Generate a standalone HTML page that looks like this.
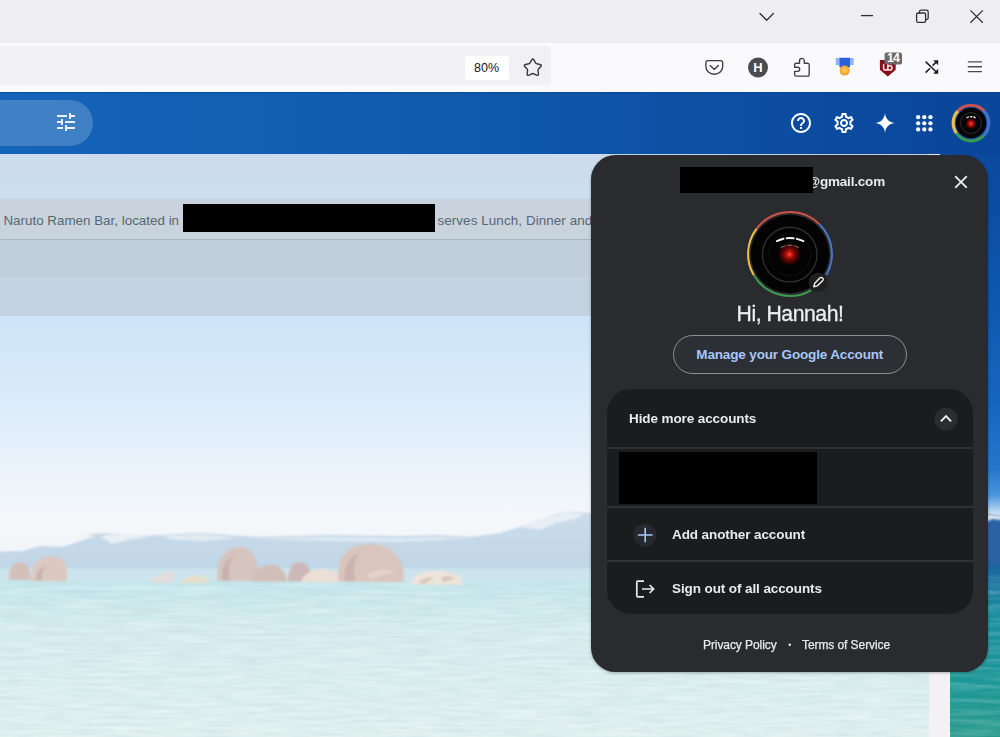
<!DOCTYPE html>
<html lang="en">
<head>
<meta charset="utf-8">
<title>Google Account menu</title>
<style>
*{box-sizing:border-box;margin:0;padding:0}
html,body{width:1000px;height:737px;overflow:hidden;background:#fff}
body{position:relative;font-family:"Liberation Sans",sans-serif;color:#fff}
.abs{position:absolute}
#photo{left:0;top:92px;width:1000px;height:645px}
#titlebar{left:0;top:0;width:1000px;height:43px;background:#eeeef2}
#toolbar{left:0;top:42.5px;width:1000px;height:49.5px;background:#fafafc}
#urlbar{left:0;top:46.2px;width:551px;height:38.6px;background:#f1f1f5;border-radius:0 4px 4px 0}
#zoom{left:464.5px;top:55.5px;width:44px;height:24px;background:#fff;border-radius:3px;color:#15141a;font-size:12.5px;line-height:24.5px;text-align:center}
#pill{left:-40px;top:100px;width:133px;height:46px;border-radius:23px;background:rgba(255,255,255,.19)}
#panel{left:0;top:154px;width:950px;height:583px}
.row{left:0;width:950px}
#rowtext{left:3.4px;top:211.7px;font-size:13.4px;line-height:18px;color:#5a6672;white-space:nowrap}
.black{background:#000}
#dialog{left:591px;top:155.3px;width:397px;height:516.4px;border-radius:24.5px;background:#2a2b2e;box-shadow:0 1px 3px rgba(0,0,0,.3)}
#card{left:607px;top:389px;width:366px;height:225px;border-radius:24px;background:#303134;overflow:hidden}
.crow{position:absolute;left:0;width:366px;background:#1b1c1e}
.t{position:absolute;white-space:nowrap}
</style>
</head>
<body>
<!-- photo background -->
<svg id="photo" class="abs" viewBox="0 92 1000 645" preserveAspectRatio="none">
  <defs>
    <linearGradient id="hdr" gradientUnits="userSpaceOnUse" x1="0" y1="0" x2="1000" y2="0">
      <stop offset="0" stop-color="#1464b9"/>
      <stop offset=".45" stop-color="#105aae"/>
      <stop offset=".75" stop-color="#0c4ea2"/>
      <stop offset="1" stop-color="#094599"/>
    </linearGradient>
    <linearGradient id="wsky" gradientUnits="userSpaceOnUse" x1="0" y1="154" x2="0" y2="545">
      <stop offset="0" stop-color="#cddcec"/>
      <stop offset=".41" stop-color="#cce4f8"/>
      <stop offset=".55" stop-color="#d5e9f9"/>
      <stop offset=".7" stop-color="#e0eefa"/>
      <stop offset=".83" stop-color="#ecf4fa"/>
      <stop offset=".93" stop-color="#f4f7fa"/>
      <stop offset="1" stop-color="#f4f7fa"/>
    </linearGradient>
    <linearGradient id="wmtn" gradientUnits="userSpaceOnUse" x1="0" y1="510" x2="0" y2="570">
      <stop offset="0" stop-color="#ccdcea"/>
      <stop offset="1" stop-color="#c0d6e6"/>
    </linearGradient>
    <linearGradient id="wwater" gradientUnits="userSpaceOnUse" x1="0" y1="578" x2="0" y2="737">
      <stop offset="0" stop-color="#cfe5ee"/>
      <stop offset=".035" stop-color="#c2e5ea"/>
      <stop offset=".14" stop-color="#c9e8ec"/>
      <stop offset=".33" stop-color="#d4ecee"/>
      <stop offset=".64" stop-color="#daeeef"/>
      <stop offset="1" stop-color="#dff0ef"/>
    </linearGradient>
    <linearGradient id="ssky" gradientUnits="userSpaceOnUse" x1="0" y1="92" x2="0" y2="516">
      <stop offset="0" stop-color="#094599"/>
      <stop offset=".25" stop-color="#0b4ca2"/>
      <stop offset=".5" stop-color="#0f58b0"/>
      <stop offset=".75" stop-color="#1767be"/>
      <stop offset=".89" stop-color="#2577cc"/>
      <stop offset=".95" stop-color="#4a94dc"/>
      <stop offset=".98" stop-color="#9cc6ec"/>
      <stop offset="1" stop-color="#e0ecf6"/>
    </linearGradient>
    <linearGradient id="swater" gradientUnits="userSpaceOnUse" x1="0" y1="565" x2="0" y2="737">
      <stop offset="0" stop-color="#1d669e"/>
      <stop offset=".12" stop-color="#1b78a2"/>
      <stop offset=".28" stop-color="#1a8d9f"/>
      <stop offset=".65" stop-color="#1c9698"/>
      <stop offset="1" stop-color="#289a8c"/>
    </linearGradient>
    <filter id="b1"><feGaussianBlur stdDeviation="0.9"/></filter>
    <filter id="b2"><feGaussianBlur stdDeviation="1.6"/></filter>
    <filter id="ripple" x="0" y="0" width="100%" height="100%"><feTurbulence type="fractalNoise" baseFrequency="0.018 0.22" numOctaves="2" seed="7"/><feColorMatrix values="0 0 0 0 1  0 0 0 0 1  0 0 0 0 1  1.6 0 0 0 -0.62"/></filter>
    <filter id="ripple2" x="0" y="0" width="100%" height="100%"><feTurbulence type="fractalNoise" baseFrequency="0.03 0.3" numOctaves="2" seed="23"/><feColorMatrix values="0 0 0 0 .55  0 0 0 0 .68  0 0 0 0 .72  0 1.8 0 0 -0.72"/></filter>
    <clipPath id="cl"><rect x="0" y="154" width="950" height="583"/></clipPath>
    <clipPath id="cr"><rect x="950" y="92" width="50" height="645"/></clipPath>
      </defs>
  <!-- header sky -->
  <rect x="0" y="92" width="1000" height="62" fill="url(#hdr)"/>
  <rect x="0" y="91.600" width="1000" height="1.600" fill="#0a3f86" opacity=".55"/>
  <!-- washed scene -->
  <g clip-path="url(#cl)">
    <rect x="0" y="154" width="950" height="430" fill="url(#wsky)"/>
    <path d="M-20 541 L20 537 L60 538 L100 533 L140 536 L200 533 L260 537 L330 535 L400 536 L440 535 L470 537 L500 533 L530 524 L560 513 L585 512 L620 520 L660 524 L700 520 L760 529 L820 526 L880 520 L940 512 L975 500 L1020 506 V582 H-20z" fill="url(#wmtn)" filter="url(#b1)"/>
    <!-- snow caps -->
    <g fill="#f3f6f9" filter="url(#b1)">
      <path d="M-20 534 L75 532 L95 536 L80 541 L62 547 L40 546 L22 551 L-20 552z"/>
      <path d="M100 536 L125 533 L150 537 L128 540 L112 544z" opacity=".75"/>
      <path d="M160 536 L200 534 L240 538 L205 541 L175 540z" opacity=".6"/>
      <path d="M250 539 L330 537 L400 538 L440 537 L470 539 L400 542 L320 541z" opacity=".55"/>
      <path d="M520 527 L545 518 L562 513 L585 513 L575 519 L556 523 L540 530z" opacity=".7"/>
    </g>
    <!-- distant water band -->
    <rect x="0" y="568" width="950" height="16" fill="#cde4ee"/>
    <rect x="0" y="567" width="950" height="2" fill="#c3dbe8" filter="url(#b1)"/>
    <rect x="0" y="578" width="950" height="159" fill="url(#wwater)"/>
    <rect x="0" y="583" width="950" height="154" filter="url(#ripple)" opacity=".4"/>
    <rect x="0" y="590" width="950" height="147" filter="url(#ripple2)" opacity=".45"/>
    <g filter="url(#b1)">
      <!-- rock group A -->
      <path d="M9 580 Q8 566 18 562 Q28 561 30 572 L31 580z" fill="#d4c0bb"/>
      <path d="M31.500 581 Q30 563 43 558 Q58 552 65 564 Q69 575 66 581.500z" fill="#dbc9c1"/>
      <path d="M36 580 Q36 568 46 566 Q40 574 42 581z" fill="#c9b2ad"/>
      <!-- small rocks -->
      <path d="M147 582.500 Q158 573 173 570.500 Q176 578 172 583z" fill="#e2dddd"/>
      <path d="M180 583 Q186 575 200 575 Q209 577 208.500 583z" fill="#e6dfcc"/>
      <!-- rock group B -->
      <path d="M217.600 581 Q215 557 231 549 Q248 542 255 558 L262 581z" fill="#d6c4be"/>
      <path d="M222 580 Q220 562 234 556 Q226 566 230 581z" fill="#c9b1ad"/>
      <path d="M252 581.500 Q254 566 270 564.500 Q285 566 287 581.500z" fill="#d1beb9"/>
      <!-- rock group C -->
      <path d="M288 581.500 Q288 563 300 562 Q311 563 312 581.500z" fill="#cdb8b5"/>
      <path d="M301 582 Q305 570 322 569 Q338 569 343 582z" fill="#ecdfd6"/>
      <path d="M338.600 581.500 Q335 552 358 545.500 Q387 539 400 560 Q406 573 403 582z" fill="#d9c5be"/>
      <path d="M345 581 Q342 560 360 552 Q350 566 356 581z" fill="#ccb3ad"/>
      <path d="M366 575 Q380 566 396 572 Q384 574 372 580z" fill="#e3d3c9"/>
      <!-- rock D -->
      <path d="M411 584.500 Q414 572 430 571 Q452 570 462 578 L462 585z" fill="#ede4dc"/>
      <path d="M418 583 Q424 576 434 577 Q430 581 424 584z M440 578 Q448 574 456 578 Q450 580 444 582z" fill="#d9c7ba"/>
    </g>
    <rect x="929" y="154" width="21" height="583" fill="#f3f1f4"/>
  </g>
  <!-- saturated strip on the right -->
  <g clip-path="url(#cr)">
    <rect x="950" y="154" width="50" height="420" fill="url(#ssky)"/>
    <path d="M940 520 L960 517 L985 514 L1010 517 V570 H940z" fill="#2c63a4" filter="url(#b1)"/>
    <path d="M940 520 L960 517 L985 514 L1010 517 L1010 521 L992 519 L985 523 L975 520 L960 523 L940 524z" fill="#dfe9f4" filter="url(#b1)"/>
    <rect x="950" y="565" width="50" height="172" fill="url(#swater)"/>
    <rect x="950" y="575" width="50" height="162" filter="url(#ripple)" opacity=".3"/>
  </g>
</svg>

<!-- page rows -->
<div class="abs row" style="top:200px;height:39px;background:#c8d3de;box-shadow:0 1px 2px rgba(60,64,67,.28),0 1px 3px 1px rgba(60,64,67,.1)"></div>
<div class="abs row" style="top:240px;height:38px;background:#c1cfdc"></div>
<div class="abs row" style="top:278px;height:38px;background:#c3d2e0;border-top:1px solid #cad6e2"></div>
<div class="abs black" style="left:183px;top:204px;width:252px;height:28px"></div>
<div id="rowtext2" class="abs" style="left:437.4px;top:211.7px;font-size:13.4px;line-height:18px;color:#5a6672;white-space:nowrap;letter-spacing:.1px">serves Lunch, Dinner and</div>

<!-- browser chrome -->
<div id="titlebar" class="abs"></div>
<div id="toolbar" class="abs"></div>
<div id="urlbar" class="abs"></div>
<div id="zoom" class="abs">80%</div>
<svg class="abs" style="left:0;top:0" width="1000" height="92" viewBox="0 0 1000 92" fill="none" stroke-linecap="round" stroke-linejoin="round">
  <!-- window controls -->
  <g stroke="#2f2f36" stroke-width="1.3">
    <path d="M760 13.5 L766.7 20.2 L773.4 13.5"/>
    <path d="M861 15.6 H873" stroke-linecap="butt"/>
    <rect x="916.6" y="13" width="9" height="9.4" rx="1.6"/>
    <path d="M919.4 13 V12 a1.8 1.8 0 0 1 1.8-1.8 H926.4 a1.8 1.8 0 0 1 1.8 1.8 V17.8 a1.8 1.8 0 0 1-1.8 1.8 H925.6"/>
    <path d="M970.4 10.4 L982.8 22.8 M982.8 10.4 L970.4 22.8" stroke-linecap="butt"/>
  </g>
  <!-- star -->
  <path d="M531.62 60.09 Q532.80 58.00 533.98 60.09 L535.58 62.93 Q535.97 63.63 536.76 63.79 L539.96 64.44 Q542.31 64.91 540.69 66.68 L538.48 69.08 Q537.94 69.67 538.03 70.46 L538.40 73.71 Q538.68 76.09 536.50 75.09 L533.53 73.73 Q532.80 73.40 532.07 73.73 L529.10 75.09 Q526.92 76.09 527.20 73.71 L527.57 70.46 Q527.66 69.67 527.12 69.08 L524.91 66.68 Q523.29 64.91 525.64 64.44 L528.84 63.79 Q529.63 63.63 530.02 62.93 z" stroke="#3a3a42" stroke-width="1.45"/>
  <!-- pocket -->
  <g stroke="#3e3e46" stroke-width="1.35">
    <path d="M707.8 60.6 H720.8 a1.9 1.9 0 0 1 1.9 1.9 V66.6 a8.4 7.6 0 0 1-16.8 0 V62.5 a1.9 1.9 0 0 1 1.9-1.9z"/>
    <path d="M710.2 65.4 L714.3 69.4 L718.4 65.4"/>
  </g>
  <!-- H -->
  <circle cx="758" cy="67.5" r="10" fill="#4b4b52"/>
  <!-- puzzle -->
  <path d="M799.5 63.2 H796.2 a1.6 1.6 0 0 0-1.6 1.6 V67.2 h3 a2.1 2.1 0 0 1 0 4.2 h-3 v3.2 a1.6 1.6 0 0 0 1.6 1.6 H807.6 a1.6 1.6 0 0 0 1.6-1.6 V64.8 a1.6 1.6 0 0 0-1.6-1.6 H804.3 v-2.4 a2.4 2.4 0 0 0-4.8 0z" stroke="#3e3e46" stroke-width="1.35"/>
  <!-- medal -->
  <g stroke="none">
    <rect x="835.8" y="58" width="3.6" height="7" fill="#8db2f5"/>
    <rect x="850" y="58" width="3.6" height="7" fill="#8db2f5"/>
    <path d="M839.4 57.8 H850 V67 L844.7 69.5 L839.4 67z" fill="#2c5fdb"/>
    <circle cx="844.7" cy="70.6" r="5" fill="#f7a52c"/>
    <circle cx="844.7" cy="70.2" r="3" fill="#fbbf4a"/>
  </g>
  <!-- ublock -->
  <path d="M879.9 60 H895.7 V69 Q895.7 70 894.9 70.600 L887.8 76.500 L880.7 70.600 Q879.9 70 879.9 69z" fill="#84101a" stroke="none"/>
  <path d="M883.6 64.5 v3.400 a2.100 2.100 0 0 0 4.200 0 v-3.400 m0 3.400 a2.100 2.100 0 0 0 4.200 0 a2.100 2.100 0 0 0 -4.200 0" stroke="#f6dede" stroke-width="1.500" />
  <rect x="884.6" y="52.4" width="17.4" height="12" rx="2" fill="#6b6b6b" stroke="none"/>
  <!-- shuffle -->
  <g stroke="#1c1b22" stroke-width="1.5" stroke-linecap="butt">
    <path d="M925.6 61.6 L936.6 72.2"/>
    <path d="M925.6 72.6 L930 68.2 M932.6 65.6 L936.8 61.4"/>
    <path d="M938.2 60.2 V65.2 L933.2 60.2z M938.2 73.8 V68.8 L933.2 73.8z" fill="#1c1b22" stroke="none"/>
  </g>
  <!-- hamburger -->
  <path d="M967.8 61.8 H982 M967.8 66.7 H982 M967.8 71.6 H982" stroke="#4a4a52" stroke-width="1.35" stroke-linecap="butt"/>
</svg>
<div class="t" style="left:751px;top:60px;width:14px;text-align:center;font-size:13px;line-height:15px;font-weight:700;color:#fff">H</div>
<div class="t" style="left:884.6px;top:52.4px;width:17.4px;text-align:center;font-size:12.4px;line-height:12.4px;font-weight:700;color:#fff;letter-spacing:-.9px;text-indent:-.6px">14</div>

<!-- gmail header -->
<div id="pill" class="abs"></div>
<svg class="abs" style="left:54px;top:110px" width="24" height="24" viewBox="0 0 24 24" fill="#eaf1fb"><path d="M3 17v2h6v-2H3zM3 5v2h10V5H3zm10 16v-2h8v-2h-8v-2h-2v6h2zM7 9v2H3v2h4v2h2V9H7zm14 4v-2H11v2h10zm-6-4h2V7h4V5h-4V3h-2v6z"/></svg>
<svg class="abs" style="left:789.3px;top:111px" width="24" height="24" viewBox="0 0 24 24" fill="#fff"><path d="M11 18h2v-2h-2v2zm1-16C6.48 2 2 6.48 2 12s4.48 10 10 10 10-4.480 10-10S17.52 2 12 2zm0 18c-4.410 0-8-3.590-8-8s3.590-8 8-8 8 3.590 8 8-3.590 8-8 8zm0-14c-2.210 0-4 1.790-4 4h2c0-1.100.9-2 2-2s2 .9 2 2c0 2-3 1.750-3 5h2c0-2.250 3-2.500 3-5 0-2.210-1.790-4-4-4z"/></svg>
<svg class="abs" style="left:831.8px;top:111px" width="24" height="24" viewBox="0 0 24 24" fill="#fff"><path d="M19.43 12.98c.04-.32.07-.64.07-.98 0-.34-.03-.66-.07-.98l2.11-1.65c.19-.15.24-.42.12-.64l-2-3.460c-.09-.16-.26-.25-.44-.25-.06 0-.12.01-.17.03l-2.490 1c-.52-.4-1.080-.73-1.690-.98l-.38-2.650C14.460 2.180 14.250 2 14 2h-4c-.25 0-.46.18-.49.42l-.38 2.650c-.61.25-1.170.59-1.690.98l-2.490-1c-.06-.02-.12-.03-.18-.03-.17 0-.34.09-.43.25l-2 3.460c-.13.22-.07.49.12.64l2.110 1.650c-.04.32-.07.65-.07.98 0 .33.03.66.07.98l-2.110 1.650c-.19.15-.24.42-.12.64l2 3.460c.09.16.26.25.44.25.06 0 .12-.01.17-.03l2.490-1c.52.4 1.080.73 1.690.98l.38 2.650c.03.24.24.42.49.42h4c.25 0 .46-.18.49-.42l.38-2.650c.61-.25 1.170-.59 1.690-.98l2.490 1c.06.02.12.03.18.03.17 0 .34-.09.43-.25l2-3.460c.12-.22.07-.49-.12-.64l-2.110-1.650zm-1.980-1.710c.04.31.05.52.05.73 0 .21-.02.43-.05.73l-.14 1.130.89.7 1.080.84-.7 1.210-1.270-.51-1.040-.42-.9.68c-.43.32-.84.56-1.250.73l-1.060.43-.16 1.130-.2 1.350h-1.400l-.19-1.350-.16-1.130-1.060-.43c-.43-.18-.83-.41-1.230-.71l-.91-.7-1.060.43-1.270.51-.7-1.210 1.080-.84.89-.7-.14-1.130c-.03-.31-.05-.54-.05-.74s.02-.43.05-.73l.14-1.130-.89-.7-1.080-.84.7-1.210 1.270.51 1.040.42.9-.68c.43-.32.84-.56 1.250-.73l1.060-.43.16-1.130.2-1.350h1.390l.19 1.350.16 1.130 1.060.43c.43.18.83.41 1.230.71l.91.7 1.060-.43 1.270-.51.7 1.210-1.070.85-.89.7.14 1.130zM12 8c-2.210 0-4 1.790-4 4s1.790 4 4 4 4-1.790 4-4-1.790-4-4-4zm0 6c-1.100 0-2-.9-2-2s.9-2 2-2 2 .9 2 2-.9 2-2 2z"/></svg>
<svg class="abs" style="left:872.5px;top:111px" width="24" height="24" viewBox="0 0 24 24" fill="#fff"><path d="M12 1.800 C12.3 7.800 16.2 11.700 22.200 12 C16.2 12.300 12.300 16.200 12 22.200 C11.700 16.200 7.800 12.300 1.800 12 C7.800 11.700 11.700 7.800 12 1.800z"/></svg>
<svg class="abs" style="left:912.4px;top:110.800px" width="24.600" height="24.600" viewBox="0 0 24 24" fill="#fff"><circle cx="6" cy="6" r="2.100"/><circle cx="12" cy="6" r="2.100"/><circle cx="18" cy="6" r="2.100"/><circle cx="6" cy="12" r="2.100"/><circle cx="12" cy="12" r="2.100"/><circle cx="18" cy="12" r="2.100"/><circle cx="6" cy="18" r="2.100"/><circle cx="12" cy="18" r="2.100"/><circle cx="18" cy="18" r="2.100"/></svg>
<!-- header avatar -->
<svg class="abs" style="left:950.8px;top:103px" width="40" height="40" viewBox="-20 -20 40 40" fill="none">
  <defs><radialGradient id="eye1"><stop offset="0" stop-color="#ff4a3a"/><stop offset=".35" stop-color="#b80e0e"/><stop offset=".7" stop-color="#500404"/><stop offset="1" stop-color="#200" stop-opacity="0"/></radialGradient></defs>
  <g stroke-width="3.2">
    <path d="M-13.2 -11.9 A17.8 17.8 0 0 1 13.2 -11.9" stroke="#c8524d"/>
    <path d="M13.2 -11.9 A17.8 17.8 0 0 1 12.6 12.6" stroke="#3f74c8"/>
    <path d="M12.600 12.6 A17.8 17.8 0 0 1 -14.6 10.2" stroke="#3c9850"/>
    <path d="M-14.6 10.2 A17.8 17.8 0 0 1 -13.2 -11.9" stroke="#e8bd52"/>
  </g>
  <circle r="15.2" fill="#050505"/>
  <circle r="10.5" stroke="#2d2d30" stroke-width="1"/>
  <circle cy=".6" r="6" fill="url(#eye1)"/>
  <path d="M-4.6 -5.2 Q0 -7.400 4.600 -5.2" stroke="#e8e8e8" stroke-width="1.3" stroke-dasharray="2.600 1"/>
</svg>

<div id="rowtext" class="abs">Naruto Ramen Bar, located in</div>

<!-- account dialog -->
<div class="abs" style="left:939.5px;top:153px;width:10.5px;height:6px;background:#0b4ca0"></div>
<div id="dialog" class="abs"></div>
<div class="t" style="left:807px;top:173px;font-size:13.5px;line-height:18px;font-weight:700;color:#e8eaed;letter-spacing:-.2px">@gmail.com</div>
<div class="abs black" style="left:679.5px;top:167px;width:133px;height:25.6px"></div>
<svg class="abs" style="left:950px;top:171px" width="22" height="22" viewBox="0 0 24 24" fill="#e8eaed"><path d="M19 6.410L17.590 5 12 10.590 6.410 5 5 6.410 10.590 12 5 17.590 6.410 19 12 13.410 17.590 19 19 17.590 13.410 12z"/></svg>

<!-- big avatar -->
<svg class="abs" style="left:744px;top:208px" width="92" height="92" viewBox="-46 -46 92 92" fill="none">
  <defs>
    <radialGradient id="eye2"><stop offset="0" stop-color="#ff7a60"/><stop offset=".1" stop-color="#ee2a1c"/><stop offset=".28" stop-color="#b0100c"/><stop offset=".52" stop-color="#640606"/><stop offset=".8" stop-color="#2a0202"/><stop offset="1" stop-color="#120000" stop-opacity="0"/></radialGradient>
  </defs>
  <g stroke-width="2">
    <path d="M-33.500 -25.200 A41.900 41.900 0 0 1 29.600 -29.600" stroke="#d0524a"/>
    <path d="M29.600 -29.600 A41.900 41.900 0 0 1 36.300 21" stroke="#4878cf"/>
    <path d="M21 36.300 A41.900 41.900 0 0 1 -36.300 21" stroke="#3d9a4e"/>
    <path d="M-36.300 21 A41.900 41.900 0 0 1 -33.500 -25.200" stroke="#efc050"/>
  </g>
  <circle r="39.300" fill="#030303"/>
  <circle cx="-.3" cy=".6" r="27.300" stroke="#2e2e32" stroke-width="1.4"/>
  <circle cx="-.3" cy=".6" r="21" stroke="#101012" stroke-width="1"/>
  <circle cx="-.5" cy=".3" r="12" fill="url(#eye2)"/>
  <path d="M-14 -12.500 Q-.5 -19.500 14 -12.500" stroke="#f4f4f4" stroke-width="2" stroke-dasharray="7 3.200" stroke-dashoffset="-1" stroke-linecap="round"/>
  <path d="M-9 -6.500 Q-.5 -11 8.500 -6.500" stroke="#8a6a6a" stroke-width="1.300" stroke-dasharray="4.500 2.500" stroke-linecap="round" opacity=".8"/>
  <!-- edit badge -->
  <circle cx="28.200" cy="28.400" r="9.600" fill="#1f1f1f"/>
  <g transform="translate(28.200 28.400) rotate(45)">
    <path d="M-1.900 -4.600 a1.500 1.500 0 0 1 1.500-1.500 h.8 a1.500 1.500 0 0 1 1.500 1.500 V3 L0 6.200 L-1.900 3z" stroke="#f2f2f2" stroke-width="1.400" stroke-linejoin="round"/>
  </g>
</svg>

<div class="t" style="left:690px;top:299px;width:200px;text-align:center;font-size:21.2px;line-height:30px;color:#eceef0;letter-spacing:-.45px;-webkit-text-stroke:.3px #eceef0">Hi, Hannah!</div>
<div class="abs" style="left:672.500px;top:334.500px;width:234.500px;height:39px;border-radius:20px;border:1.400px solid #8e918f;background:#2c2f34"></div>
<div class="t" style="left:672.500px;top:345.5px;width:234.500px;text-align:center;font-size:13.5px;line-height:18px;font-weight:700;color:#a8c7fa;letter-spacing:-.15px">Manage your Google Account</div>

<div id="card" class="abs">
  <div class="crow" style="top:0;height:57.500px"></div>
  <div class="crow" style="top:59.500px;height:57.500px"></div>
  <div class="crow" style="top:119px;height:52px"></div>
  <div class="crow" style="top:173px;height:52px"></div>
</div>
<div class="t" style="left:629px;top:410.2px;font-size:13.5px;line-height:18px;font-weight:700;color:#e8eaed;letter-spacing:-.1px">Hide more accounts</div>
<svg class="abs" style="left:934.1px;top:407px" width="24" height="24" viewBox="0 0 24 24"><circle cx="12" cy="12" r="11.500" fill="#2b2c2f"/><path d="M6.900 14.300 L12 9.200 L17.100 14.300" fill="none" stroke="#f1f3f4" stroke-width="1.900"/></svg>
<div class="abs black" style="left:618.500px;top:451.500px;width:198px;height:52px"></div>
<svg class="abs" style="left:633px;top:523px" width="24" height="24" viewBox="0 0 24 24"><circle cx="12" cy="12" r="11.500" fill="#262930"/><path d="M12.2 4.7 V19.3 M4.9 12 H19.5" fill="none" stroke="#a8c7fa" stroke-width="1.600"/></svg>
<div class="t" style="left:672px;top:526.4px;font-size:13.5px;line-height:18px;font-weight:700;color:#e8eaed;letter-spacing:-.1px">Add another account</div>
<svg class="abs" style="left:633px;top:577px" width="24" height="24" viewBox="0 0 24 24" fill="none" stroke="#e8eaed" stroke-width="1.700"><path d="M11 4.200 H4.800 a1 1 0 0 0-1 1 V18.800 a1 1 0 0 0 1 1 H11"/><path d="M9 12 H20.500 M16.600 8 L20.600 12 L16.600 16"/></svg>
<div class="t" style="left:672px;top:579.9px;font-size:13.5px;line-height:18px;font-weight:700;color:#e8eaed;letter-spacing:-.1px">Sign out of all accounts</div>
<div class="t" style="left:703px;top:637px;font-size:12px;line-height:16px;color:#e8eaed;-webkit-text-stroke:.25px #e8eaed;letter-spacing:-.08px">Privacy Policy</div>
<div class="t" style="left:788.2px;top:637.2px;font-size:8.5px;line-height:16px;color:#e8eaed">•</div>
<div class="t" style="left:802px;top:637px;font-size:12px;line-height:16px;color:#e8eaed;-webkit-text-stroke:.25px #e8eaed;letter-spacing:-.08px">Terms of Service</div>
</body>
</html>
